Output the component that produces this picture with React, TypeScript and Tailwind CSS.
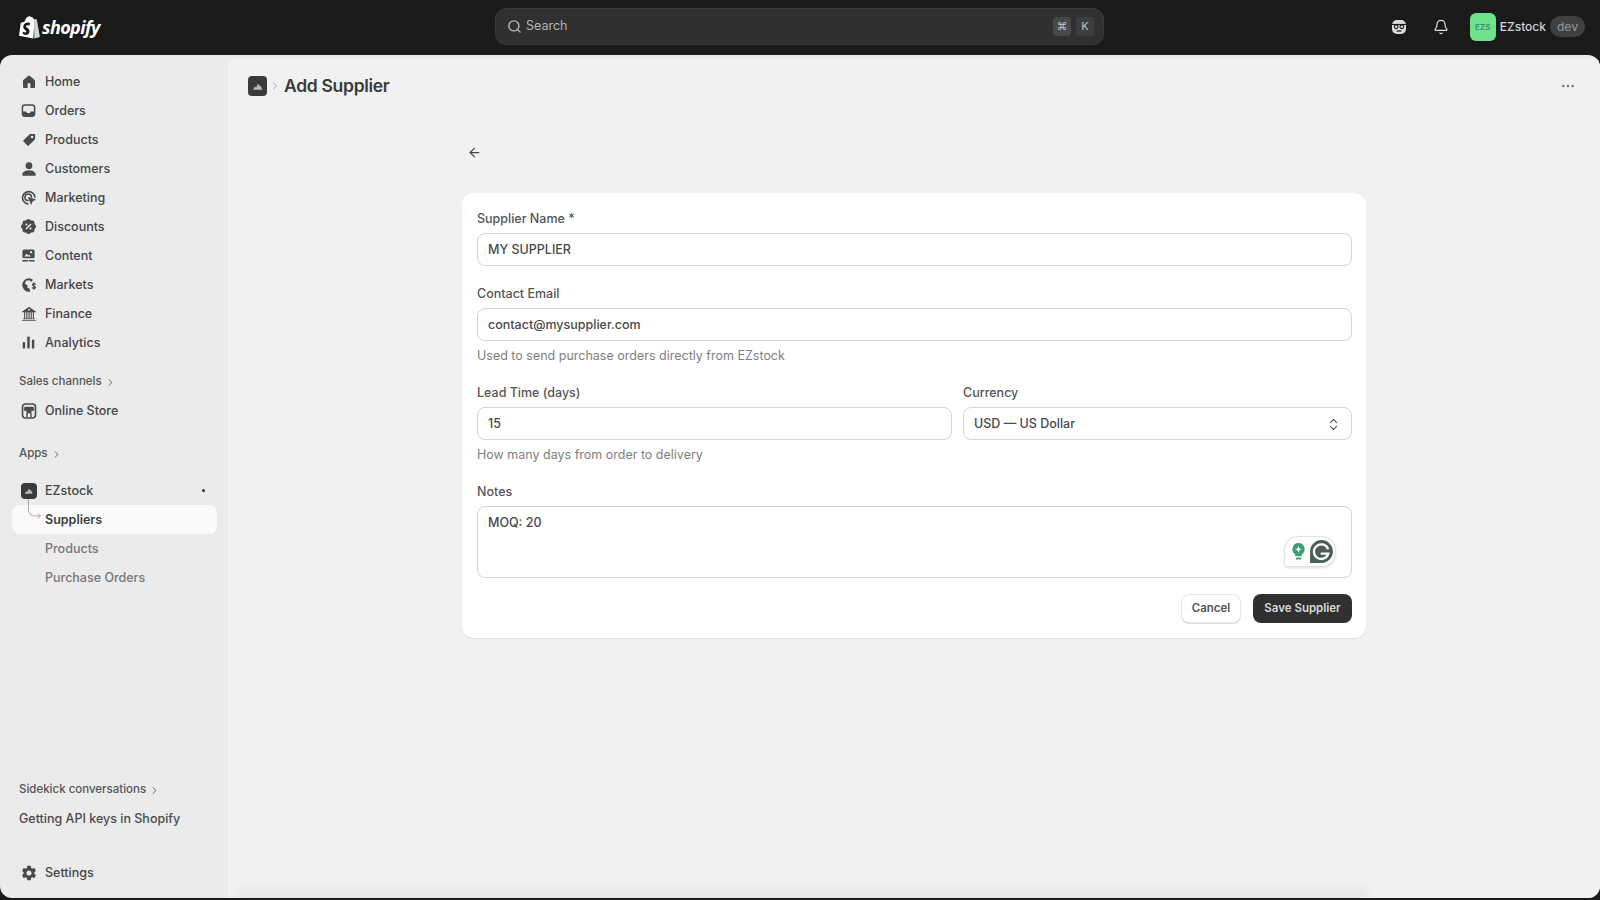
import type { ReactNode } from 'react';
import { ArrowLeft, Bell, ChevronRight, ChevronsUpDown, Ellipsis, Search } from 'lucide-react';
import { BsBank2, BsPersonFill, BsTagFill } from 'react-icons/bs';
import { GoHomeFill } from 'react-icons/go';
import { IoSettingsSharp } from 'react-icons/io5';
import { RiDiscountPercentFill } from 'react-icons/ri';

function OrdersIcon() {
  return (
    <svg viewBox="0 0 16 16" className="h-[15px] w-[15px]" fill="none">
      <rect x="1.5" y="2" width="13" height="12" rx="2.5" stroke="currentColor" strokeWidth="1.6" />
      <path d="M2 9h3.5l1 1.6h3L10.5 9H14v3.5a1.5 1.5 0 0 1-1.5 1.5h-9A1.5 1.5 0 0 1 2 12.500z" fill="currentColor" />
    </svg>
  );
}

function MarketingIcon() {
  return (
    <svg viewBox="0 0 16 16" className="h-[16px] w-[16px]" fill="none" stroke="currentColor">
      <path d="M7 14a6.200 6.200 0 1 1 6.900-6.800" strokeWidth="1.6" strokeLinecap="round" />
      <path d="M7 10.600a3.300 3.300 0 1 1 3.500-3.400" strokeWidth="1.500" strokeLinecap="round" />
      <path d="M7.200 7.200l7.300 2.500-3 1.300-1.300 3.300z" fill="currentColor" strokeWidth="0.6" />
    </svg>
  );
}

function ContentIcon() {
  return (
    <svg viewBox="0 0 16 16" className="h-[15px] w-[15px]" fill="none">
      <rect x="1.500" y="1.500" width="13" height="9.500" rx="1.800" fill="currentColor" />
      <circle cx="10.800" cy="4.500" r="1.200" fill="#ebebeb" />
      <path d="M3.500 9l2.500-3 2 2 1-1 1.500 2z" fill="#ebebeb" />
      <path d="M2 13.500h5M9 13.500h5" stroke="currentColor" strokeWidth="1.600" strokeLinecap="round" />
    </svg>
  );
}

function MarketsIcon() {
  return (
    <svg viewBox="0 0 16 16" className="h-[16px] w-[16px]">
      <path d="M8 1.200a6.800 6.800 0 1 0 1.200 13.500l-.6-2.900-2.200-1.300V8.200L4 6.800l1-3 3.500-.6L10 4.800l.9-.3.900-1.900A6.800 6.800 0 0 0 8 1.200z" fill="currentColor" />
      <path d="M14.300 7.300c-.4-.7-2.600-1-2.700.4-.1 1.500 2.900 1 2.800 2.700-.1 1.400-2.500 1.200-3 .3M12.800 5.800v6.400" fill="none" stroke="currentColor" strokeWidth="1.200" strokeLinecap="round" />
    </svg>
  );
}

function AnalyticsIcon() {
  return (
    <svg viewBox="0 0 16 16" className="h-[15px] w-[15px]" fill="currentColor">
      <rect x="1.800" y="7.500" width="2.600" height="7" rx="1" />
      <rect x="6.700" y="1.500" width="2.600" height="13" rx="1" />
      <rect x="11.600" y="4.800" width="2.600" height="9.700" rx="1" />
    </svg>
  );
}

function StoreIcon() {
  return (
    <svg viewBox="0 0 16 16" className="h-[16px] w-[16px]" fill="none" stroke="currentColor">
      <rect x="1.500" y="1" width="13" height="14" rx="3" strokeWidth="1.600" />
      <path d="M3.800 4h8.400l.8 2.600a1.500 1.500 0 0 1-2.500.8 1.900 1.900 0 0 1-5 0 1.500 1.500 0 0 1-2.500-.8z" fill="currentColor" strokeWidth="0.500" />
      <path d="M6 14v-3.500a1 1 0 0 1 1-1h2a1 1 0 0 1 1 1V14" strokeWidth="1.400" />
    </svg>
  );
}

function AppIcon({ size }: { size: string }) {
  return (
    <span className={`flex items-center justify-center rounded-[4px] bg-[#3a3a3a] ${size}`}>
      <svg viewBox="0 0 16 16" className="h-[70%] w-[70%]" fill="#b9b9b9">
        <path d="M2.500 12.500l2.300-4 1.500 1.200L8.500 5l2 3.200 1-.9 2.200 5.200z" />
      </svg>
    </span>
  );
}

function ShopifyBag() {
  return (
    <svg viewBox="0 0 22 25" className="h-[25px] w-[21px]">
      <path d="M16.300 4.700l-1 .3C14.800 3.500 14 2.600 12.900 2.600h-.2C12.200 2 11.600 1.700 11 1.700 7.800 1.800 6.300 5.600 5.800 7.500l-3 .9c-.9.300-1 .3-1.100 1.200L0 22.300 15 25z" fill="#ffffff" />
      <path d="M16.800 4.600l-1 .3L16 25l6-1.500S18.800 5.500 18.700 5.300c-.1-.3-1.500-.7-1.900-.7z" fill="#d4d4d4" />
      <path d="M11.600 9.200l-.8 2.400s-.9-.4-1.900-.4c-1.500.1-1.600 1-1.600 1.300.1 1.300 3.500 1.600 3.700 4.700.1 2.400-1.300 4-3.400 4.200-2.500.1-3.800-1.300-3.800-1.300l.5-2.300s1.300 1 2.400.9c.7 0 1-.6.900-1-.1-1.700-2.900-1.600-3.100-4.400-.2-2.400 1.400-4.700 4.700-4.900 1.300-.1 1.900.2 2.400.4z" fill="#1a1a1a" />
    </svg>
  );
}

function GrammarlyWidget() {
  return (
    <div className="absolute bottom-[10px] right-[15px] flex h-[31px] w-[52px] items-center justify-between rounded-[14px] rounded-bl-[3px] border border-[#e3e3e3] bg-white pl-[6px] pr-[1px] shadow-sm">
      <svg viewBox="0 0 16 20" className="h-[19px] w-[15px]">
        <path d="M8 1a6.500 6.500 0 0 0-3.600 11.900V15h7.200v-2.100A6.500 6.500 0 0 0 8 1z" fill="#3f9e78" />
        <path d="M8 4.200l1 2.500 2.500 1-2.500 1-1 2.500-1-2.500-2.500-1 2.500-1z" fill="#ffffff" />
        <rect x="5" y="16.500" width="6" height="2" rx="1" fill="#3f9e78" />
      </svg>
      <svg viewBox="0 0 24 24" className="h-[25px] w-[25px]">
        <path d="M12 1a11 11 0 1 1 0 22H1V12A11 11 0 0 1 12 1z" fill="#4a5f57" />
        <path d="M18 9a7 7 0 1 0 .5 5H12" fill="none" stroke="#ffffff" strokeWidth="2.200" strokeLinecap="round" />
      </svg>
    </div>
  );
}

const navItems: { label: string; icon: ReactNode }[] = [
  { label: 'Home', icon: <GoHomeFill className="h-[16px] w-[16px]" /> },
  { label: 'Orders', icon: <OrdersIcon /> },
  { label: 'Products', icon: <BsTagFill className="h-[14px] w-[14px] -scale-x-100" /> },
  { label: 'Customers', icon: <BsPersonFill className="h-[18px] w-[18px]" /> },
  { label: 'Marketing', icon: <MarketingIcon /> },
  { label: 'Discounts', icon: <RiDiscountPercentFill className="h-[17px] w-[17px]" /> },
  { label: 'Content', icon: <ContentIcon /> },
  { label: 'Markets', icon: <MarketsIcon /> },
  { label: 'Finance', icon: <BsBank2 className="h-[14px] w-[14px]" /> },
  { label: 'Analytics', icon: <AnalyticsIcon /> },
];

function NavRow({ icon, label }: { icon: ReactNode; label: string }) {
  return (
    <div className="flex h-[29px] items-center">
      <span className="flex w-[45px] shrink-0 items-center justify-center pl-[15px] pr-[3px] text-[#4a4a4a]">{icon}</span>
      <span className="pt-[1px] text-[12.5px] font-medium text-[#454545]">{label}</span>
    </div>
  );
}

function SectionLabel({ children, className = '' }: { children: ReactNode; className?: string }) {
  return (
    <div className={`flex h-[16px] items-center gap-[3px] pl-[19px] text-[11.5px] font-medium text-[#555555] ${className}`}>
      {children}
      <ChevronRight className="h-[11px] w-[11px]" strokeWidth={2} />
    </div>
  );
}

function Sidebar() {
  return (
    <aside className="flex w-[228px] shrink-0 flex-col pt-[12px] pb-[11px]">
      {navItems.map((item) => (
        <NavRow key={item.label} icon={item.icon} label={item.label} />
      ))}
      <SectionLabel className="mt-[17px]">Sales channels</SectionLabel>
      <div className="mt-[6px]">
        <NavRow icon={<StoreIcon />} label="Online Store" />
      </div>
      <SectionLabel className="mt-[21px]">Apps</SectionLabel>
      <div className="mt-[14px] flex h-[29px] items-center pr-[23px]">
        <span className="flex w-[45px] shrink-0 justify-center pl-[15px] pr-[3px]">
          <AppIcon size="h-[16px] w-[16px]" />
        </span>
        <span className="pt-[1px] text-[12.5px] font-medium text-[#454545]">EZstock</span>
        <span className="ml-auto h-[3px] w-[3px] rounded-full bg-[#303030]" />
      </div>
      <div className="relative ml-[12px] mr-[11px] flex h-[29px] items-center rounded-lg bg-[#fafafa] pl-[33px] pt-[1px] text-[12.5px] font-semibold text-[#3f3f3f]">
        Suppliers
        <svg viewBox="0 0 16 24" className="absolute left-[15px] top-[-7px] h-[24px] w-[16px]" fill="none" stroke="#a8a8a8" strokeWidth="1">
          <path d="M1.500 1v11a6 6 0 0 0 6 6h6M11 15.500l2.500 2.500-2.500 2.500" />
        </svg>
      </div>
      <div className="flex h-[29px] items-center pl-[45px] pt-[1px] text-[12.5px] font-medium text-[#777777]">Products</div>
      <div className="flex h-[29px] items-center pl-[45px] pt-[1px] text-[12.5px] font-medium text-[#777777]">Purchase Orders</div>
      <div className="mt-auto">
        <SectionLabel className="translate-y-[1px]">Sidekick conversations</SectionLabel>
        <div className="mt-[14px] flex h-[16px] items-center pl-[19px] text-[12.5px] font-medium text-[#4a4a4a]">Getting API keys in Shopify</div>
        <div className="mt-[31px]">
          <NavRow icon={<IoSettingsSharp className="h-[16px] w-[16px]" />} label="Settings" />
        </div>
      </div>
    </aside>
  );
}

function Box({ children }: { children: ReactNode }) {
  return (
    <div className="flex h-[33px] items-center rounded-lg border border-[#d4d4d4] bg-white px-[10px] pt-[1px] text-[12.5px] font-medium text-[#4a4a4a]">
      {children}
    </div>
  );
}

function Label({ children }: { children: ReactNode }) {
  return <div className="mb-[6px] h-[17px] pt-[1px] text-[12.5px] leading-[16px] font-medium text-[#555555]">{children}</div>;
}

function Help({ children }: { children: ReactNode }) {
  return <div className="mt-[6px] h-[17px] pt-[1px] text-[12.5px] leading-[16px] text-[#808080]">{children}</div>;
}

function SupplierForm() {
  return (
    <div className="mt-[33px] rounded-xl bg-white pl-[15px] pr-[14px] pt-[17px] pb-[15px] shadow-[0_1px_1px_rgba(0,0,0,0.08)]">
      <Label>Supplier Name *</Label>
      <Box>MY SUPPLIER</Box>

      <div className="mt-[19px]">
        <Label>Contact Email</Label>
        <Box>contact@mysupplier.com</Box>
        <Help>Used to send purchase orders directly from EZstock</Help>
      </div>

      <div className="mt-[20px] grid grid-cols-[475px_389px] gap-x-[11px]">
        <div>
          <Label>Lead Time (days)</Label>
          <Box>15</Box>
          <Help>How many days from order to delivery</Help>
        </div>
        <div>
          <Label>Currency</Label>
          <Box>
            <span className="flex-1">USD — US Dollar</span>
            <ChevronsUpDown className="h-[15px] w-[15px] text-[#5c5c5c]" strokeWidth={1.75} />
          </Box>
        </div>
      </div>

      <div className="mt-[20px]">
        <Label>Notes</Label>
        <div className="relative h-[72px] rounded-lg border border-[#d4d4d4] bg-white px-[10px] pt-[7px] text-[12.5px] font-medium text-[#4a4a4a]">
          MOQ: 20
          <GrammarlyWidget />
        </div>
      </div>

      <div className="mt-[16px] flex justify-end gap-[12px]">
        <button className="h-[29px] w-[60px] rounded-lg border border-[#e6e6e6] bg-white text-[11.5px] font-semibold text-[#555555] shadow-[0_1px_1px_rgba(0,0,0,0.15)]">
          Cancel
        </button>
        <button className="h-[29px] w-[99px] rounded-lg bg-[#303030] text-[11.5px] font-semibold text-[#d9d9d9]">
          Save Supplier
        </button>
      </div>
    </div>
  );
}

export default function App() {
  return (
    <div className="flex h-[900px] w-[1600px] flex-col overflow-hidden bg-[#1a1a1a] font-['Inter',sans-serif]">
      <header className="flex h-[55px] shrink-0 items-center pb-[2px] text-[#e3e3e3]">
        <div className="flex w-[495px] shrink-0 items-center gap-[2px] pl-[19px]">
          <ShopifyBag />
          <span className="font-['Open_Sans',sans-serif] text-[18px] font-bold italic leading-none tracking-[-0.6px] text-white">shopify</span>
        </div>
        <div className="flex h-[37px] w-[609px] items-center rounded-[11px] border border-[#3a3a3a] bg-[#303030] pl-[11px] pr-[9px] text-[12.5px] text-[#b5b5b5]">
          <Search className="h-[15px] w-[15px]" strokeWidth={2.25} />
          <span className="ml-[4px] flex-1">Search</span>
          <span className="flex h-[19px] w-[18px] items-center justify-center rounded-[4px] bg-[#484848] text-[11px] text-[#c4c4c4]">⌘</span>
          <span className="ml-[5px] flex h-[19px] w-[18px] items-center justify-center rounded-[4px] bg-[#3d3d3d] text-[11px] text-[#c4c4c4]">K</span>
        </div>
        <div className="ml-auto flex items-center pr-[15px]">
          <svg viewBox="0 0 16 16" className="h-[16px] w-[16px]">
            <rect x="1" y="1" width="14" height="14" rx="5" fill="#dcdcdc" />
            <path d="M1 5.500h14" stroke="#1a1a1a" strokeWidth="1.200" />
            <circle cx="5.200" cy="7.800" r="1.800" fill="none" stroke="#1a1a1a" strokeWidth="1.100" />
            <circle cx="10.800" cy="7.800" r="1.800" fill="none" stroke="#1a1a1a" strokeWidth="1.100" />
            <path d="M5.500 12h5" stroke="#1a1a1a" strokeWidth="1.200" />
          </svg>
          <Bell className="ml-[26px] h-[16px] w-[16px]" strokeWidth={1.75} />
          <span className="ml-[21px] flex h-[28px] w-[26px] items-center justify-center rounded-[6px] bg-[#6fe28c] text-[8px] font-semibold text-[#3f8a75]">EZS</span>
          <span className="ml-[4px] text-[12px] font-medium text-[#d4d4d4]">EZstock</span>
          <span className="ml-[4px] flex h-[21px] w-[35px] items-center justify-center rounded-full bg-[#404040] text-[12px] font-medium text-[#8f8f8f]">dev</span>
        </div>
      </header>

      <div className="flex h-[843px] overflow-hidden rounded-xl bg-[#ebebeb]">
        <Sidebar />
        <main className="relative mt-[4px] flex-1 overflow-hidden bg-[#f1f1f1]">
          <div className="flex h-[54px] items-center pl-[20px] pr-[24px]">
            <AppIcon size="h-[20px] w-[19px]" />
            <ChevronRight className="ml-[2px] h-[12px] w-[12px] text-[#9a9a9a]" strokeWidth={1.75} />
            <h1 className="ml-[3px] text-[17.5px] font-semibold tracking-[-0.3px] text-[#3a3a3a]">Add Supplier</h1>
            <Ellipsis className="ml-auto h-[16px] w-[16px] text-[#7a7a7a]" strokeWidth={2} />
          </div>
          <div className="mx-auto w-[904px]">
            <ArrowLeft className="mt-[32px] ml-[5px] h-[15px] w-[15px] text-[#4a4a4a]" strokeWidth={2} />
            <SupplierForm />
          </div>
          <div className="absolute bottom-0 left-[10px] h-[14px] w-[1130px] bg-gradient-to-b from-transparent to-[#e4e4e4] blur-[3px]" />
        </main>
      </div>
    </div>
  );
}
